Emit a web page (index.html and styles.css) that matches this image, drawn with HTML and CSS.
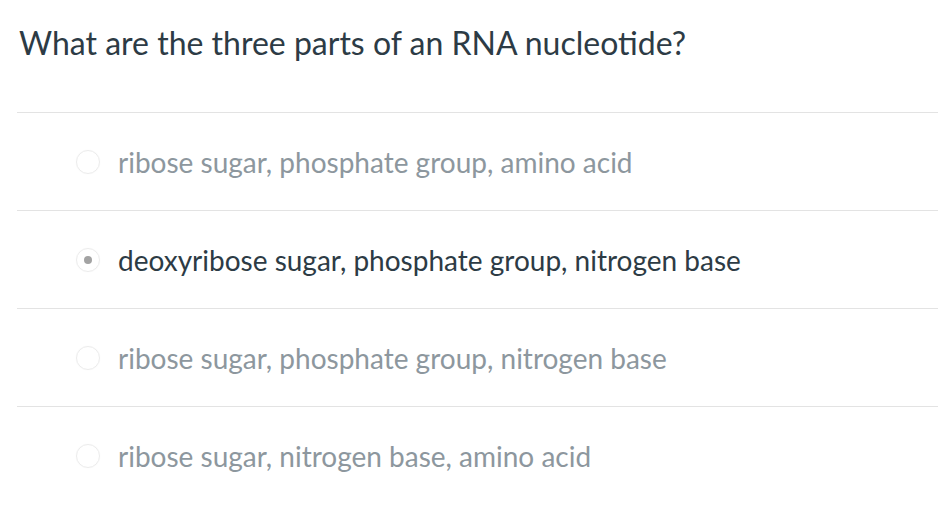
FILE: index.html
```html
<!DOCTYPE html>
<html lang="en">
<head>
<meta charset="utf-8">
<title>Quiz question</title>
<link rel="stylesheet" href="styles.css">
</head>
<body>
<div class="question">
  <h1 class="question-text">What are the three parts of an RNA nucleotide?</h1>
  <ul class="answers">
    <li class="answer">
      <span class="radio"></span>
      <span class="label">ribose sugar, phosphate group, amino acid</span>
    </li>
    <li class="answer selected">
      <span class="radio"><span class="dot"></span></span>
      <span class="label">deoxyribose sugar, phosphate group, nitrogen base</span>
    </li>
    <li class="answer">
      <span class="radio"></span>
      <span class="label">ribose sugar, phosphate group, nitrogen base</span>
    </li>
    <li class="answer">
      <span class="radio"></span>
      <span class="label">ribose sugar, nitrogen base, amino acid</span>
    </li>
  </ul>
</div>
</body>
</html>
```

FILE: styles.css
```css
html, body {
  margin: 0;
  padding: 0;
  background: #ffffff;
}

body {
  font-family: Lato, "Open Sans", sans-serif;
  color: #2d3b45;
}

.question {
  padding-left: 17px;
}

.question-text {
  margin: 0;
  padding: 23px 0 0 2px;
  height: 112px;
  font-size: 32px;
  font-weight: 400;
  line-height: 40px;
  color: #2d3b45;
  box-sizing: border-box;
}

.answers {
  list-style: none;
  margin: 0;
  padding: 0;
}

.answer {
  display: flex;
  align-items: center;
  height: 97px;
  border-top: 1px solid #e3e3e3;
  padding-left: 59px;
  box-sizing: content-box;
}

.radio {
  width: 22px;
  height: 22px;
  border-radius: 50%;
  border: 1px solid #ececec;
  box-shadow: 0 0 1px rgba(0, 0, 0, 0.06);
  display: flex;
  align-items: center;
  justify-content: center;
  flex: none;
  margin-right: 18px;
}

.dot {
  width: 8px;
  height: 8px;
  border-radius: 50%;
  background: #a3a3a3;
}

.label {
  font-size: 28px;
  color: #8d979e;
  line-height: 34px;
}

.selected .label {
  color: #2d3b45;
}
```
